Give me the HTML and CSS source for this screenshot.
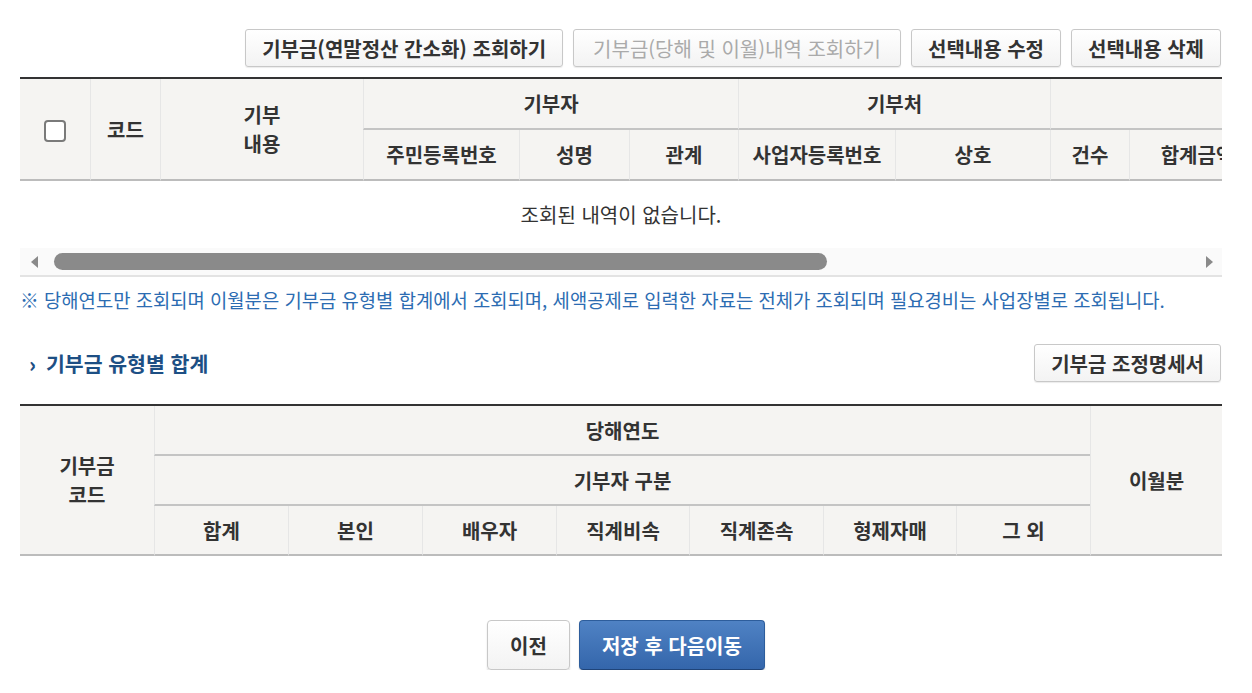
FILE: index.html
```html
<!DOCTYPE html>
<html lang="ko">
<head>
  <meta charset="UTF-8" />
  <title>기부금 명세</title>
  <link rel="stylesheet" href="styles.css">
</head>
<body>

  <div class="page">
    <div class="top-actions">
      <button class="btn">기부금(연말정산 간소화) 조회하기</button>
      <button class="btn" disabled>기부금(당해 및 이월)내역 조회하기</button>
      <button class="btn">선택내용 수정</button>
      <button class="btn">선택내용 삭제</button>
    </div>

    <div class="table-scroll">
      <table class="grid detail">
        <colgroup>
          <col style="width:70px"><col style="width:70px"><col style="width:203px">
          <col style="width:156px"><col style="width:110px"><col style="width:109px">
          <col style="width:157px"><col style="width:155px">
          <col style="width:79px"><col style="width:136px">
        </colgroup>
        <thead>
          <tr>
            <th rowspan="2" class="first"><span class="check"></span></th>
            <th rowspan="2">코드</th>
            <th rowspan="2" class="two-line">기부<br>내용</th>
            <th colspan="3" class="group">기부자</th>
            <th colspan="2" class="group">기부처</th>
            <th colspan="2" class="group"></th>
          </tr>
          <tr>
            <th>주민등록번호</th>
            <th>성명</th>
            <th>관계</th>
            <th>사업자등록번호</th>
            <th>상호</th>
            <th>건수</th>
            <th>합계금액</th>
          </tr>
        </thead>
      </table>
    </div>
    <div class="empty">조회된 내역이 없습니다.</div>
    <div class="hscroll">
      <span class="arrow left"></span>
      <div class="track"><div class="thumb"></div></div>
      <span class="arrow right"></span>
    </div>

    <p class="note">※ 당해연도만 조회되며 이월분은 기부금 유형별 합계에서 조회되며, 세액공제로 입력한 자료는 전체가 조회되며 필요경비는 사업장별로 조회됩니다.</p>

    <div class="section-head">
      <h3>기부금 유형별 합계</h3>
      <button class="btn">기부금 조정명세서</button>
    </div>

    <table class="grid summary">
      <colgroup>
        <col style="width:134px"><col style="width:134px"><col style="width:134px"><col style="width:134px">
        <col style="width:133px"><col style="width:134px"><col style="width:133px"><col style="width:134px">
        <col style="width:132px">
      </colgroup>
      <thead>
        <tr>
          <th rowspan="3" class="first two-line">기부금<br>코드</th>
          <th colspan="7" class="group">당해연도</th>
          <th rowspan="3">이월분</th>
        </tr>
        <tr>
          <th colspan="7" class="group">기부자 구분</th>
        </tr>
        <tr>
          <th>합계</th>
          <th>본인</th>
          <th>배우자</th>
          <th>직계비속</th>
          <th>직계존속</th>
          <th>형제자매</th>
          <th>그 외</th>
        </tr>
      </thead>
    </table>

    <div class="footer-actions">
      <button class="btn big">이전</button>
      <button class="btn big primary">저장 후 다음이동</button>
    </div>
  </div>

</body>
</html>
```

FILE: styles.css
```css
body {
  margin: 0;
  background: #ffffff;
  font-family: "Noto Sans CJK KR", "Noto Sans", sans-serif;
  color: #333;
}

.page {
  padding: 0 30px 0 20px;
}

.btn {
  height: 38px;
  padding: 0 16px;
  border: 1px solid #c8c8c8;
  border-radius: 3px;
  background: linear-gradient(#ffffff, #f3f3f3);
  box-shadow: 0 1px 1px rgba(0,0,0,0.08);
  font-family: inherit;
  font-size: 20px;
  font-weight: bold;
  color: #333;
  cursor: pointer;
}

.btn:disabled {
  padding: 0 19px;
  color: #aaa;
  font-weight: normal;
}

.top-actions {
  display: flex;
  justify-content: flex-end;
  gap: 10px;
  padding: 29px 1px 0 0;
  margin-bottom: 10px;
}

/* header tables */
.grid {
  border-collapse: separate;
  border-spacing: 0;
  table-layout: fixed;
  border-top: 2px solid #333;
}

.grid th {
  height: 49px;
  padding: 0;
  background: #f5f4f2;
  border-left: 1px solid #e6e6e6;
  border-bottom: 2px solid #bcbcbc;
  font-size: 20px;
  font-weight: bold;
  line-height: 25px;
  color: #333;
  text-align: center;
  white-space: nowrap;
}

.grid th.two-line {
  line-height: 29px;
}

.grid th.first {
  border-left: none;
}

.grid th.group {
  border-bottom-color: #c4c4c4;
}

.table-scroll {
  overflow: hidden;
}

.detail {
  width: 1245px;
}

.check {
  display: inline-block;
  width: 18px;
  height: 18px;
  border: 2px solid #7a7a7a;
  border-radius: 4px;
  background: #fff;
  vertical-align: middle;
}

.empty {
  height: 67px;
  line-height: 67px;
  text-align: center;
  font-size: 20px;
  color: #333;
}

.hscroll {
  display: flex;
  align-items: center;
  height: 27px;
  background: #fafafa;
  border-bottom: 2px solid #e3e3e3;
}

.arrow {
  width: 0;
  height: 0;
  border-top: 6px solid transparent;
  border-bottom: 6px solid transparent;
}

.arrow.left {
  margin: 0 11px 0 11px;
  border-right: 7px solid #8a8a8a;
}

.arrow.right {
  margin: 0 9px 0 9px;
  border-left: 7px solid #8a8a8a;
}

.track {
  flex: 1;
  padding-left: 5px;
}

.thumb {
  width: 773px;
  height: 17px;
  border-radius: 9px;
  background: #8a8a8a;
}

.note {
  margin: 11px 0 0;
  font-size: 18.8px;
  line-height: 24px;
  color: #2c6cb2;
}

.section-head {
  display: flex;
  align-items: center;
  justify-content: space-between;
  margin-top: 32px;
  padding-right: 1px;
}

.section-head h3 {
  margin: 0;
  padding-left: 9px;
  font-size: 20.5px;
  color: #1d4f84;
}

.section-head h3::before {
  content: "›";
  margin-right: 10px;
  font-weight: 900;
}

.summary {
  width: 100%;
  margin-top: 22px;
}

.summary th {
  height: 48px;
}

.footer-actions {
  display: flex;
  justify-content: center;
  gap: 9px;
  padding-left: 10px;
  margin-top: 64px;
}

.btn.big {
  height: 50px;
  padding: 0 22px;
  border-radius: 4px;
  box-shadow: 0 2px 2px rgba(0,0,0,0.12);
}

.btn.primary {
  border: 1px solid #2d5d9c;
  border-bottom-color: #1f4479;
  background: linear-gradient(#4f82c4, #3466ab);
  color: #fff;
}
```
